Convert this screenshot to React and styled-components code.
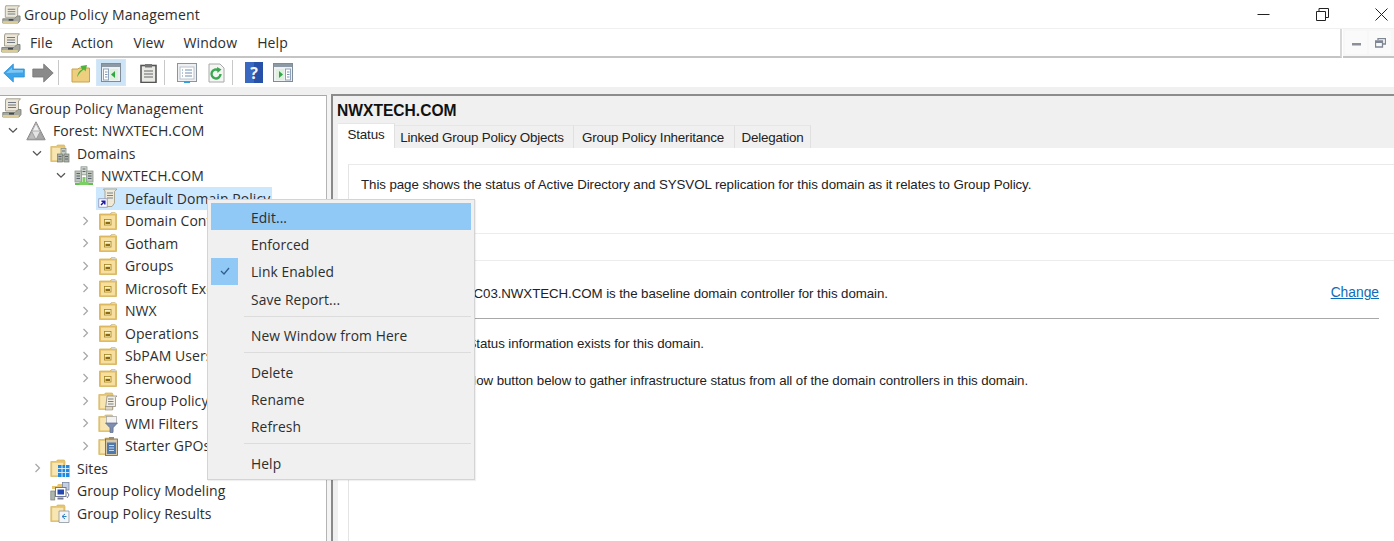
import React from 'react';
import styled, { createGlobalStyle } from 'styled-components';

const Global = createGlobalStyle`
  html, body { margin: 0; padding: 0; background: #fff; overflow: hidden; }
  #root { width: 1394px; height: 541px; }
`;
const segoe = `"Open Sans", "Noto Sans", sans-serif`;
const arial = `"Liberation Sans", Arial, sans-serif`;

const Win = styled.div`
  position: relative; width: 1394px; height: 541px; overflow: hidden;
  display: flex; flex-direction: column; background: #fff; font-family: ${segoe}; color: #2e2e2e;
`;
const TitleBar = styled.div`
  height: 29px; flex: none; display: flex; align-items: center; padding-left: 2px; gap: 3px;
  font-size: 14px; letter-spacing: .12px; border-bottom: 1px solid #f0f0f0; box-sizing: border-box;
`;
const TitleText = styled.span`flex: 1;`;
const WinBtns = styled.div`display: flex; align-items: center; height: 100%; padding-right: 6px; gap: 46px;`;
const MenuBar = styled.div`
  height: 29px; flex: none; display: flex; align-items: stretch; box-sizing: border-box;
`;
const MenuField = styled.div`
  flex: 1; display: flex; align-items: center; padding-left: 1px;
  border-bottom: 2px solid #c4c4c4; border-right: 2px solid #d8d8d8; font-size: 14px; letter-spacing: .12px;
`;
const MenuLabel = styled.span`margin-left: ${p => p.$ml}px;`;
const MdiBox = styled.div`
  width: 51px; flex: none; margin-left: 1px; background: #f7f7f7; display: flex; align-items: flex-end; gap: 2px;
  border-bottom: 2px solid #c4c4c4; padding: 0 0 2px 2px; box-sizing: border-box;
`;
const MdiBtn = styled.div`width: 22px; height: 23px; background: #fafafa; display: flex; align-items: center; justify-content: center;`;
const Toolbar = styled.div`
  height: 29px; flex: none; display: flex; align-items: center; box-sizing: border-box;
`;
const ToolSlot = styled.div`
  flex: none; display: flex; align-items: center; justify-content: center; height: 27px;
  width: ${p => p.$w}px; margin-left: ${p => p.$ml || 0}px; box-sizing: border-box;
  ${p => p.$on && `background: #cde4f7; border: 1px solid #d3e7f8;`}
`;
const ToolSep = styled.div`flex: none; width: 1px; height: 25px; background: #c8c8c8; margin-left: ${p => p.$ml}px;`;
const Strip = styled.div`height: 8px; flex: none; background: #f0f0f0;`;
const Panes = styled.div`flex: 1; display: flex; min-height: 0;`;
const TreePane = styled.div`
  width: 327px; flex: none; box-sizing: border-box; border-top: 1px solid #a8a8a8; border-right: 1px solid #b4b4b4;
  padding-top: 1px;
`;
const Splitter = styled.div`width: 4px; flex: none; background: #f4f4f4;`;
const Row = styled.div`
  height: 22.5px; display: flex; align-items: center; font-size: 14px; letter-spacing: .06px; white-space: nowrap;
  padding-left: ${p => p.$depth === 0 ? 2 : 2 + (p.$depth - 1) * 24}px;
`;
const Chevron = styled.div`
  width: 24px; flex: none; display: flex; justify-content: center; align-items: center; height: 100%; margin-left: -1px; padding-right: 1px;
`;
const RowBody = styled.div`
  display: flex; align-items: center; height: 100%; gap: 7px; padding-right: 2px; margin-left: ${p => p.$sel ? -2 : 0}px;
  padding-left: ${p => p.$sel ? 2 : 0}px;
  ${p => p.$sel && `background: #cce8ff;`}
`;
const RightPane = styled.div`
  flex: 1; border-top: 2px solid #8c8c8c; border-left: 2px solid #8a8a8a; box-sizing: border-box; margin-top: -1px; min-width: 0;
  font-family: ${arial}; display: flex; flex-direction: column; background: #f0f0f0;
`;
const Header = styled.div`
  height: 52px; flex: none; box-sizing: border-box; padding: 5px 0 0 4px; display: flex; flex-direction: column;
`;
const Heading = styled.div`font-weight: bold; font-size: 15.6px; line-height: 19px; color: #111; height: 22px;`;
const Tabs = styled.div`display: flex; align-items: flex-end; flex: 1; padding-left: 1px;`;
const Tab = styled.div`
  box-sizing: border-box; font-size: 13.4px; letter-spacing: -.2px; color: #222;
  width: ${p => p.$w}px; height: ${p => p.$active ? 25 : 23}px; display: flex; align-items: center; justify-content: center;
  background: ${p => p.$active ? '#fff' : '#f0f0f0'};
  border-top: 1px solid #e6e6e6; border-right: 1px solid #e0e0e0;
  padding-right: ${p => p.$pr || 0}px;
  ${p => p.$active && 'padding-bottom: 3px;'}
`;
const Body = styled.div`
  flex: 1; min-height: 0; background: #fff; margin-left: 5px; padding: 16px 0 0 10px; font-size: 13.3px; letter-spacing: -.07px; color: #222; overflow: hidden;
`;
const Frame = styled.div`
  border-top: 1px solid #eaeaea; border-left: 1px solid #e4e4e4; height: 400px; box-sizing: border-box;
`;
const Intro = styled.div`height: 69px; box-sizing: border-box; padding: 12px 0 0 12px; border-bottom: 1px solid #ececec;`;
const Spacer = styled.div`height: 26px; border-bottom: 1px solid #ececec;`;
const BaseRow = styled.div`
  display: flex; justify-content: space-between; margin: 0 15px 0 12px; height: 58px; padding-top: 25px; box-sizing: border-box;
  border-bottom: 1px solid #a8a8a8;
`;
const BaseText = styled.span`padding-left: 103px;`;
const Change = styled.span`color: #0c6cb8; text-decoration: underline; font-size: 13.8px; letter-spacing: 0; margin-top: -1px;`;
const Para = styled.div`padding-left: ${p => p.$pl}px; margin-top: ${p => p.$mt}px;`;

const Menu = styled.div`
  position: absolute; left: 207px; top: 199px; width: 268px; height: 281px; box-sizing: border-box;
  background: #f0f0f0; border: 1px solid #d4d4d4; padding: 3px; font-size: 13.8px; letter-spacing: .1px; color: #2e2e2e;
  box-shadow: 1px 1px 1px rgba(0,0,0,.06);
`;
const Item = styled.div`
  height: 27.4px; box-sizing: border-box; padding-top: 1px; display: flex; align-items: center; padding-left: 40px; position: relative;
  ${p => p.$hot && 'background: #90c8f6;'}
`;
const Check = styled.div`
  position: absolute; left: 0; top: 0; width: 27px; height: 27px; background: #90c8f6; display: flex; align-items: center; justify-content: center;
`;
const Sep = styled.div`height: 1px; background: #dcdcdc; margin: 3px 0 5px 33px;`;

const Shell = ({ s = 20, children }) => <svg width={s} height={s} viewBox="0 0 20 20" style={{ flex: 'none', display: 'block' }}>{children}</svg>;

const Scroll = ({ s = 20 }) => (
  <Shell s={s}>
    <path d="M4 .8h14.500l-2 2.200v10H3.500V3z" fill="#ece7d8" stroke="#9c9684" strokeWidth=".9" />
    <path d="M6 4.500h8M6 7h8M6 9.500h8" stroke="#6f7780" />
    <path d="M.8 14.500H13l3-3h3v5l-2 2.500H.8z" fill="#a6a99f" stroke="#74776e" strokeWidth=".8" />
    <path d="M.8 17h16v2.300H.8z" fill="#dccd97" />
    <rect x="7" y="14.800" width="5" height="1.800" fill="#454a50" />
  </Shell>
);
const Forest = () => (
  <Shell>
    <path d="M10 .8l9.200 18H.8z" fill="#e4e4e4" stroke="#8c8c8c" />
    <path d="M10 2.500l3.800 7.500H6.200z" fill="#f2f2f2" stroke="#9a9a9a" strokeWidth=".7" />
    <path d="M5.800 10.500l4 7.800H1.800z" fill="#bdbdbd" stroke="#8c8c8c" strokeWidth=".7" />
    <path d="M14.200 10.500l4 7.800h-8z" fill="#a8a8a8" stroke="#8c8c8c" strokeWidth=".7" />
  </Shell>
);
const FolderBase = ({ children }) => (
  <Shell>
    <path d="M.8 3.500h5.500l1-1.500h7l.7 1.500V18.500H.8z" fill="#e6c571" stroke="#d6b45e" strokeWidth=".7" />
    <rect x="2.200" y="4.800" width="11" height="12.500" fill="#f8e6b2" />
    {children}
  </Shell>
);
const Servers = ({ x = 0, y = 0 }) => (
  <g transform={`translate(${x} ${y})`}>
    <rect x="3.500" y="0" width="5" height="7" fill="#c9cfc9" stroke="#7f8a80" strokeWidth=".7" />
    <rect x="0" y="5.500" width="5" height="8" fill="#a8b0a8" stroke="#6f7a70" strokeWidth=".7" />
    <rect x="6.500" y="5.500" width="5" height="8" fill="#a8b0a8" stroke="#6f7a70" strokeWidth=".7" />
    <path d="M1 8h3M1 10.500h3M7.500 8h3M7.500 10.500h3M4.500 2.500h3" stroke="#4e5660" strokeWidth=".8" />
  </g>
);
const DomainsIcon = () => <FolderBase><Servers x={7.5} y={5.5} /></FolderBase>;
const DomainIcon = () => (
  <Shell>
    <rect x="7" y=".8" width="6" height="8" fill="#d3d8d3" stroke="#8c978d" strokeWidth=".8" />
    <rect x="1" y="5" width="6.500" height="11" fill="#bcc4bc" stroke="#8c978d" strokeWidth=".8" />
    <rect x="12.500" y="5" width="6.500" height="11" fill="#bcc4bc" stroke="#8c978d" strokeWidth=".8" />
    <path d="M2.500 7.500h3.500M14 7.500h3.500M2.500 10h3.500M14 10h3.500M2.500 12.500h3.500M14 12.500h3.500M8.500 3h3M8.500 5.500h3" stroke="#59646e" />
    <path d="M1 18h6.500M12.500 18h6.500" stroke="#62c24f" strokeWidth="2" />
    <path d="M8.500 11h3v5h3v3h-9v-3h3z" fill="#7bd063" />
  </Shell>
);
const GpoLink = () => (
  <Shell>
    <path d="M5.500 1h13.500l-2.500 2.500V15L14 18.500H7V3z" fill="#efe9d8" stroke="#a49e8a" strokeWidth=".9" />
    <path d="M9 5h6M9 7.500h6M9 10h6" stroke="#76828f" />
    <rect x=".8" y="10.800" width="8.400" height="8.400" fill="#fff" stroke="#8a8eb0" strokeWidth=".8" />
    <path d="M3 17l3.200-3.200M3.400 13.200h3.400v3.400" stroke="#1b1ba6" strokeWidth="1.500" fill="none" />
  </Shell>
);
const OuIcon = () => (
  <Shell>
    <path d="M1.500 3h10.500l1.500-1.500h3.500L18.500 3v15.500h-17z" fill="#e2bd63" stroke="#d3b25c" strokeWidth=".8" />
    <path d="M13.500 1.500h3.500L18.500 3h-5z" fill="#d8d8d0" />
    <rect x="3" y="4.500" width="14" height="12.800" fill="#f7e09f" />
    <rect x="6.500" y="8.500" width="6.500" height="5.500" fill="#fff2c4" stroke="#a2821f" strokeWidth=".8" />
    <rect x="7.500" y="10.800" width="4.500" height="2.200" fill="#8a6a12" />
  </Shell>
);
const GpoFolder = () => (
  <FolderBase>
    <path d="M9 5h10l-1.500 1.500V15.500H7.800z" fill="#f2eee2" stroke="#908c80" strokeWidth=".8" />
    <path d="M10 8h5.500M10 10.500h5.500M10 13h5.500" stroke="#697482" strokeWidth=".9" />
    <rect x="7.500" y="15.500" width="7" height="3.500" fill="#dcd6c2" stroke="#908c80" strokeWidth=".6" />
  </FolderBase>
);
const WmiFolder = () => (
  <FolderBase>
    <rect x="8.500" y="3.500" width="10" height="7" fill="#f2f2f2" stroke="#a0a0a0" strokeWidth=".7" />
    <path d="M7.500 10h12l-4.500 4.800V19.500h-3v-4.700z" fill="#7d8eb0" stroke="#5c6c8e" strokeWidth=".7" />
  </FolderBase>
);
const StarterFolder = () => (
  <FolderBase>
    <rect x="7.500" y="3" width="12" height="16.500" fill="#d6c8a8" stroke="#6d5e42" strokeWidth=".8" />
    <rect x="9" y="6.500" width="9" height="11.500" fill="#4e78ae" />
    <path d="M11 9.500h5M11 12h5M11 14.500h5" stroke="#d6e4f5" strokeWidth=".9" />
    <rect x="11" y="1" width="5" height="2.500" fill="#a08c68" />
  </FolderBase>
);
const SitesFolder = () => (
  <FolderBase>
    <rect x="8" y="7" width="11.500" height="12" fill="#1f8ae0" />
    <path d="M8 10.500h11.500M8 14.500h11.500M12 7v12M15.500 7v12" stroke="#e4f2fb" strokeWidth=".9" />
  </FolderBase>
);
const ModelingIcon = () => (
  <Shell>
    <path d="M2 5h5l1-2h5v5H2z" fill="#e6c571" />
    <rect x="12.500" y="1.500" width="6.500" height="7.500" fill="#c5cfe2" stroke="#6c7a96" strokeWidth=".7" />
    <rect x=".8" y="10" width="4" height="9" fill="#adb5ad" stroke="#7a807a" strokeWidth=".7" />
    <rect x="5.500" y="6.500" width="10.500" height="9" fill="#fff" stroke="#6f7890" />
    <rect x="7.500" y="8.500" width="6.500" height="5" fill="#2448b0" />
    <path d="M7.500 17.500h6" stroke="#6f7890" strokeWidth="2" />
    <path d="M17 11l2 3-2 3" fill="none" stroke="#6c7a96" />
  </Shell>
);
const ResultsFolder = () => (
  <FolderBase>
    <path d="M9 8h10v11.500H9z" fill="#f4f5f8" stroke="#8c94a0" strokeWidth=".8" />
    <path d="M15 11l-3 2.500 3 2.500M16.500 13.500h-4" stroke="#2f7fc0" fill="none" />
  </FolderBase>
);

const Right = () => <svg width="7" height="10" viewBox="0 0 7 10"><path d="M1.500 1l4 4-4 4" fill="none" stroke="#a6a6a6" strokeWidth="1.200" /></svg>;
const Down = () => <svg width="10" height="7" viewBox="0 0 10 7"><path d="M1 1.200l4 4 4-4" fill="none" stroke="#555" strokeWidth="1.300" /></svg>;

const rows = [
  [0, null, Scroll, 'Group Policy Management'],
  [1, 'd', Forest, 'Forest: NWXTECH.COM'],
  [2, 'd', DomainsIcon, 'Domains'],
  [3, 'd', DomainIcon, 'NWXTECH.COM'],
  [4, null, GpoLink, 'Default Domain Policy', true],
  [4, 'r', OuIcon, 'Domain Controllers'],
  [4, 'r', OuIcon, 'Gotham'],
  [4, 'r', OuIcon, 'Groups'],
  [4, 'r', OuIcon, 'Microsoft Exchange'],
  [4, 'r', OuIcon, 'NWX'],
  [4, 'r', OuIcon, 'Operations'],
  [4, 'r', OuIcon, 'SbPAM Users'],
  [4, 'r', OuIcon, 'Sherwood'],
  [4, 'r', GpoFolder, 'Group Policy Objects'],
  [4, 'r', WmiFolder, 'WMI Filters'],
  [4, 'r', StarterFolder, 'Starter GPOs'],
  [2, 'r', SitesFolder, 'Sites'],
  [2, null, ModelingIcon, 'Group Policy Modeling'],
  [2, null, ResultsFolder, 'Group Policy Results'],
];

const BackArrow = () => (
  <svg width="22" height="20" viewBox="0 0 22 20">
    <path d="M.8 10l9.500-9v5h11v8h-11v5z" fill="#3ba4ea" stroke="#2f8fd4" strokeWidth=".8" />
    <path d="M3 10l6-5.500V7h11v2.500z" fill="#7cc6f4" />
  </svg>
);
const FwdArrow = () => (
  <svg width="22" height="20" viewBox="0 0 22 20"><path d="M21.200 10l-9.500-9v5H.8v8h10.900v5z" fill="#8a8a8a" stroke="#777" strokeWidth=".8" /></svg>
);
const UpFolder = () => (
  <svg width="20" height="21" viewBox="0 0 20 21">
    <path d="M1 7h6l1-1h10.500v14H1z" fill="#edcf7f" stroke="#c9a24e" />
    <path d="M6 15.500c.5-4 2-6.500 5-8l-1.500-3.500L16 3l-1.500 6.500-1.500-2c-2.500 1.500-5 4-7 8z" fill="#4fb33a" />
  </svg>
);
const PaneIcon = ({ right }) => (
  <svg width="20" height="19" viewBox="0 0 20 19">
    <rect x=".5" y=".5" width="19" height="18" fill="#eef2f5" stroke="#7f8c98" />
    <rect x="1" y="1" width="18" height="3" fill="#8d9aa6" />
    <rect x={right ? 3 : 9} y="6" width="8" height="11" fill="#dff0df" />
    <rect x={right ? 12.500 : 2.500} y="6" width="5" height="11" fill="#fff" stroke="#8fa4bc" />
    <path d={right ? 'M6 8l4 3.500-4 3.500z' : 'M14 8l-4 3.500 4 3.500z'} fill="#2fa844" />
    <path d={right ? 'M14 9h2.500M14 11.500h2.500M14 14h2.500' : 'M4 9h2.500M4 11.500h2.500M4 14h2.500'} stroke="#7f97b4" />
  </svg>
);
const Clipboard = () => (
  <svg width="17" height="20" viewBox="0 0 17 20">
    <rect x="1" y="2.500" width="15" height="17" fill="#e9e9e6" stroke="#555" strokeWidth="1.600" />
    <rect x="5" y="1" width="7" height="3.500" fill="#777" />
    <path d="M4 8h9M4 11h9M4 14h9" stroke="#666" />
  </svg>
);
const Props = () => (
  <svg width="20" height="20" viewBox="0 0 20 20">
    <rect x=".5" y=".5" width="19" height="18" fill="#eef0f2" stroke="#8a959f" />
    <rect x="3" y="4" width="14" height="12" fill="#fff" stroke="#b8c2cc" />
    <path d="M5 7h1M8 7h7M5 10h1M8 10h7M5 13h1M8 13h7" stroke="#6f8fb0" />
    <rect x="7" y="18" width="6" height="2" fill="#35a0e0" />
  </svg>
);
const Refresh = () => (
  <svg width="17" height="20" viewBox="0 0 17 20">
    <path d="M1 1h11l4 4v14H1z" fill="#f5f5f3" stroke="#a8a8a8" />
    <path d="M12.500 11a4.500 4.500 0 1 1-2-3.800" fill="none" stroke="#3aa850" strokeWidth="2.400" />
    <path d="M9 4l4.500 2.500L9.500 10z" fill="#3aa850" />
  </svg>
);
const HelpIcon = () => (
  <svg width="18" height="21" viewBox="0 0 18 21" style={{ fontFamily: segoe }}>
    <rect width="18" height="21" fill="#2750a8" />
    <rect width="9" height="21" fill="#3a68c0" />
    <text x="9" y="16.500" textAnchor="middle" fontSize="16" fontWeight="700" fill="#f2f4fa">?</text>
  </svg>
);

export default function App() {
  return (
    <Win>
      <Global />
      <TitleBar>
        <Scroll s={19} />
        <TitleText>Group Policy Management</TitleText>
        <WinBtns>
          <svg width="13" height="13" viewBox="0 0 13 13"><path d="M0.500 6.500h12" stroke="#222" /></svg>
          <svg width="13" height="13" viewBox="0 0 13 13"><path d="M.5 3.500h9v9h-9zM3 3.500V.5h9.500v9H9.500" fill="none" stroke="#222" /></svg>
          <svg width="13" height="13" viewBox="0 0 13 13"><path d="M.5.5l12 12M12.500.5l-12 12" stroke="#222" /></svg>
        </WinBtns>
      </TitleBar>
      <MenuBar>
        <MenuField>
          <Scroll s={20} />
          <MenuLabel $ml={9}>File</MenuLabel>
          <MenuLabel $ml={19}>Action</MenuLabel>
          <MenuLabel $ml={20}>View</MenuLabel>
          <MenuLabel $ml={19}>Window</MenuLabel>
          <MenuLabel $ml={20}>Help</MenuLabel>
        </MenuField>
        <MdiBox>
          <MdiBtn><svg width="9" height="9" viewBox="0 0 9 9"><rect y="5" width="9" height="2.500" fill="#8a8f98" /></svg></MdiBtn>
          <MdiBtn><svg width="11" height="10" viewBox="0 0 11 10"><path d="M3 2V.5h7.500V6H8M.5 3h7v6h-7z" fill="none" stroke="#7f8794" strokeWidth="1.300" /><rect x="1" y="3" width="6" height="2" fill="#7f8794" /></svg></MdiBtn>
        </MdiBox>
      </MenuBar>
      <Toolbar>
        <ToolSlot $w={22} $ml={3}><BackArrow /></ToolSlot>
        <ToolSlot $w={22} $ml={7}><FwdArrow /></ToolSlot>
        <ToolSep $ml={4} />
        <ToolSlot $w={20} $ml={12}><UpFolder /></ToolSlot>
        <ToolSlot $w={30} $ml={5} $on><PaneIcon /></ToolSlot>
        <ToolSlot $w={17} $ml={14}><Clipboard /></ToolSlot>
        <ToolSep $ml={7} />
        <ToolSlot $w={20} $ml={12}><Props /></ToolSlot>
        <ToolSlot $w={17} $ml={11}><Refresh /></ToolSlot>
        <ToolSep $ml={7} />
        <ToolSlot $w={18} $ml={12}><HelpIcon /></ToolSlot>
        <ToolSlot $w={20} $ml={10}><PaneIcon right /></ToolSlot>
      </Toolbar>
      <Strip />
      <Panes>
        <TreePane>
          {rows.map(([d, c, I, t, sel]) => (
            <Row key={t} $depth={d}>
              {d > 0 && <Chevron>{c === 'd' ? <Down /> : c === 'r' ? <Right /> : null}</Chevron>}
              <RowBody $sel={sel}><I /><span>{t}</span></RowBody>
            </Row>
          ))}
        </TreePane>
        <Splitter />
        <RightPane>
          <Header>
            <Heading>NWXTECH.COM</Heading>
            <Tabs>
              <Tab $active $w={57}>Status</Tab>
              <Tab $w={179} $pr={4}>Linked Group Policy Objects</Tab>
              <Tab $w={161} $pr={2}>Group Policy Inheritance</Tab>
              <Tab $w={76}>Delegation</Tab>
            </Tabs>
          </Header>
          <Body>
            <Frame>
              <Intro>This page shows the status of Active Directory and SYSVOL replication for this domain as it relates to Group Policy.</Intro>
              <Spacer />
              <BaseRow>
                <BaseText>DC03.NWXTECH.COM is the baseline domain controller for this domain.</BaseText>
                <Change>Change</Change>
              </BaseRow>
              <Para $pl={17} $mt={17}>No Infrastructure Status information exists for this domain.</Para>
              <Para $pl={22} $mt={22}>Click the Detect Now button below to gather infrastructure status from all of the domain controllers in this domain.</Para>
            </Frame>
          </Body>
        </RightPane>
      </Panes>
      <Menu>
        <Item $hot>Edit...</Item>
        <Item>Enforced</Item>
        <Item><Check><svg width="10" height="8" viewBox="0 0 10 8"><path d="M1 4l3 3 5-6" fill="none" stroke="#2f5f90" strokeWidth="1.300" /></svg></Check>Link Enabled</Item>
        <Item>Save Report...</Item>
        <Sep />
        <Item>New Window from Here</Item>
        <Sep />
        <Item>Delete</Item>
        <Item>Rename</Item>
        <Item>Refresh</Item>
        <Sep />
        <Item>Help</Item>
      </Menu>
    </Win>
  );
}
